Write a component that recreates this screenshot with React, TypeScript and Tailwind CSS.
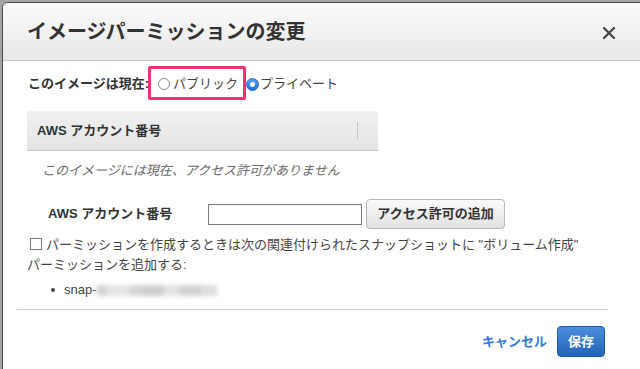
import React from "react";

const font = { fontFamily: '"Liberation Sans", "Noto Sans CJK JP", sans-serif' };

function RadioOff() {
  return <span className="inline-block w-[12px] h-[12px] rounded-full border border-[#8a8a8a] bg-white align-middle" />;
}
function RadioOn() {
  return (
    <span className="inline-flex w-[13px] h-[13px] rounded-full bg-gradient-to-b from-[#5aa2f7] to-[#1f6fe0] border border-[#2a67c4] items-center justify-center align-middle">
      <span className="block w-[5px] h-[5px] rounded-full bg-white" />
    </span>
  );
}

export default function App() {
  return (
    <div className="w-[640px] h-[369px] overflow-hidden bg-[#a4a4a4] pl-[2px] pt-[2px]" style={font}>
      <div className="relative w-[680px] h-[420px] bg-white border border-[#4a4a4a] rounded-tl-[6px] overflow-hidden">
        {/* header */}
        <div className="w-[637px] h-[58px] flex items-center justify-between pl-[24px] pr-[25px] bg-gradient-to-b from-[#fbfbfb] to-[#e8e8e8] border-b border-[#c8c8c8]">
          <div className="text-[20px] font-bold text-[#333] leading-none">イメージパーミッションの変更</div>
          <svg width="12" height="12" viewBox="0 0 12 12" className="mt-[2px]">
            <path d="M1 1 L11 11 M11 1 L1 11" stroke="#444" strokeWidth="2.2" strokeLinecap="round" />
          </svg>
        </div>

        {/* body */}
        <div className="pl-[24px] pt-[13px] text-[13px] text-[#444] leading-[20px]">
          <div className="flex items-center ml-[1px] h-[20px]">
            <span className="font-bold text-[#333]">このイメージは現在:</span>
            <span className="ml-[9px] flex items-center gap-[2px]"><RadioOff /><span className="ml-[1px]">パブリック</span></span>
            <span className="ml-[8px] flex items-center gap-[1px]"><RadioOn /><span>プライベート</span></span>
          </div>

          <div className="mt-[17px] w-[351px] h-[40px] flex items-center justify-between bg-gradient-to-b from-[#f1f1f1] to-[#e4e4e4] border-b border-[#c8c8c8]">
            <span className="pl-[10px] font-bold text-[#333]">AWS アカウント番号</span>
            <span className="w-[1px] h-[18px] bg-[#c4c4c4] mr-[20px]" />
          </div>

          <div className="mt-[10px] pl-[15px] italic text-[#6a6a6a]">このイメージには現在、アクセス許可がありません</div>

          <div className="mt-[18px] flex items-center h-[30px]">
            <span className="ml-[21px] w-[160px] font-bold text-[#333]">AWS アカウント番号</span>
            <span className="w-[154px] h-[21px] border border-[#7a7a7a] bg-white" />
            <span className="ml-[4px] w-[139px] h-[30px] rounded-[4px] border border-[#b8b8b8] bg-gradient-to-b from-[#fafafa] to-[#e2e2e2] flex items-center justify-center font-bold text-[#333]">アクセス許可の追加</span>
          </div>

          <div className="mt-[6px] text-[#444]">
            <span className="inline-block w-[12px] h-[12px] border border-[#777] bg-white align-[-1px] ml-[3px] mr-[4px]" />
            パーミッションを作成するときは次の関連付けられたスナップショットに "ボリューム作成"
            <br />
            パーミッションを追加する:
          </div>

          <div className="mt-[5px] flex items-center h-[20px] pl-[24px]">
            <span className="w-[4px] h-[4px] rounded-full bg-[#444] mr-[9px]" />
            <span>snap-</span>
            <span className="flex items-center blur-[2px]">
              <span className="w-[10px] h-[11px] bg-[#d4d4d4]" />
              <span className="w-[22px] h-[11px] bg-[#e6e6e6]" />
              <span className="w-[14px] h-[11px] bg-[#d6d6d6]" />
              <span className="w-[20px] h-[11px] bg-[#cdcdcd]" />
              <span className="w-[16px] h-[11px] bg-[#e2e2e2]" />
              <span className="w-[22px] h-[11px] bg-[#d2d2d2]" />
              <span className="w-[16px] h-[11px] bg-[#dedede]" />
            </span>
          </div>
        </div>

        <div className="mt-[9px] ml-[14px] w-[591px] h-[1px] bg-[#cfcfcf]" />

        {/* footer */}
        <div className="w-[637px] flex justify-end items-center pt-[16px] pr-[35px] gap-[10px] text-[13px] leading-[20px]">
          <span className="font-bold text-[#3578d4]">キャンセル</span>
          <span className="w-[48px] h-[31px] rounded-[4px] border border-[#1b5aa8] bg-gradient-to-b from-[#4a8fdc] to-[#2164b8] flex items-center justify-center font-bold text-white">保存</span>
        </div>

        {/* annotation highlight */}
        <div className="absolute left-[145px] top-[63px] w-[98px] h-[34px] border-[3px] border-[#f0326e] rounded-[2px]" />
      </div>
    </div>
  );
}
